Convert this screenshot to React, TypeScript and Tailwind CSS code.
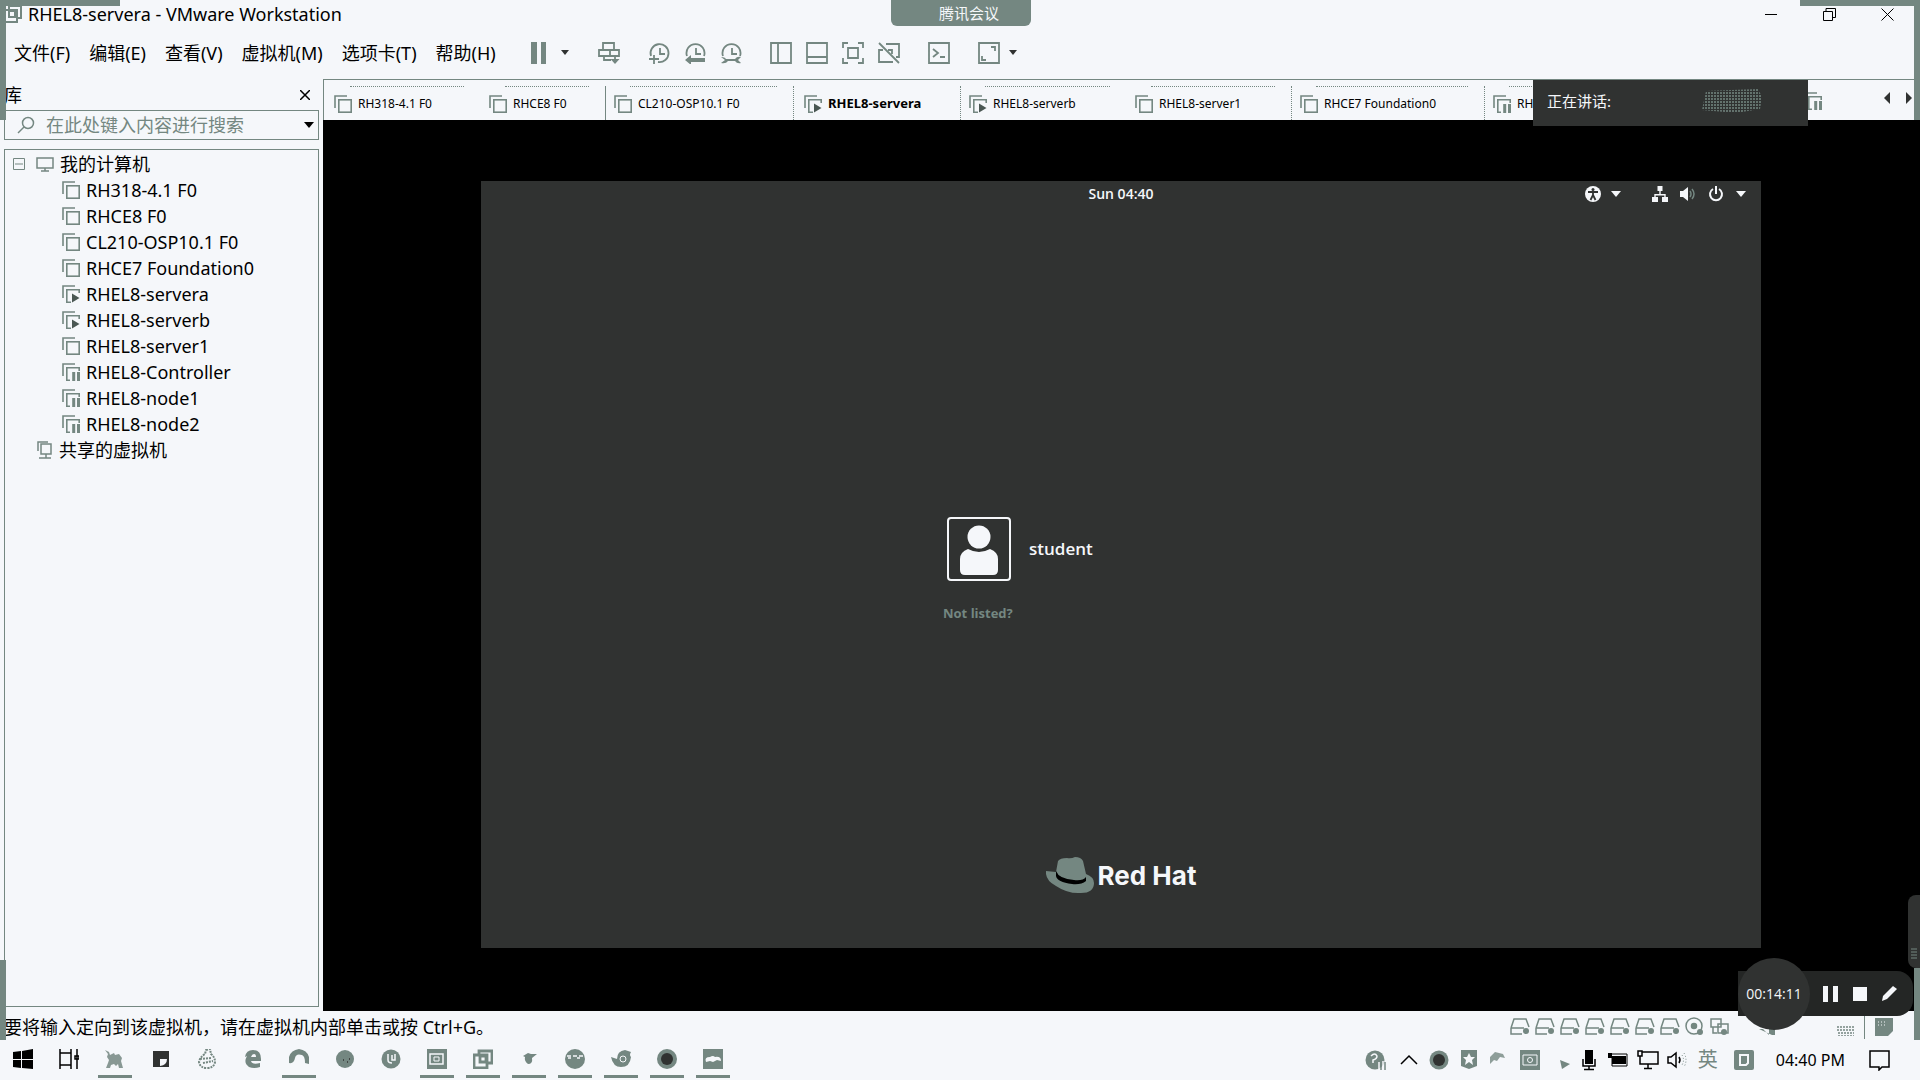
import React from "react";

const UI = "font-['Noto_Sans','Noto_Sans_CJK_SC',sans-serif]";

type VmState = "off" | "on" | "paused";

function VmIcon({ state = "off" }: { state?: VmState }) {
  return (
    <svg width="18" height="18" viewBox="0 0 18 18" className="shrink-0" fill="none" stroke="#748781" strokeWidth="1.6" aria-hidden="true">
      <path d="M1 13V1h12" />
      {state === "off" && <rect x="4.8" y="4.8" width="12.4" height="12.4" />}
      {state === "on" && (
        <>
          <path d="M9 17.2H4.8V4.8h12.4V8" />
          <path d="M10 8.5v9l7.5-4.5z" fill="#4a5753" stroke="none" />
        </>
      )}
      {state === "paused" && (
        <>
          <path d="M8 17.2H4.8V4.8h12.4V8" />
          <path d="M10.2 9h3v9h-3zM15 9h3v9h-3z" fill="#748781" stroke="none" />
        </>
      )}
    </svg>
  );
}

function Caret({ light = false }: { light?: boolean }) {
  return (
    <svg width="10" height="6" viewBox="0 0 10 6" className="shrink-0" aria-hidden="true">
      <path d="M0 0h10L5 6z" fill={light ? "#f5f7fa" : "#000"} />
    </svg>
  );
}

function Tool({ label, children }: { label: string; children: React.ReactNode }) {
  return (
    <button type="button" aria-label={label} className="flex h-6 w-9 items-center justify-center">
      <svg width="22" height="22" viewBox="0 0 22 22" fill="none" stroke="#748781" strokeWidth="1.8">
        {children}
      </svg>
    </button>
  );
}

const menus = ["文件(F)", "编辑(E)", "查看(V)", "虚拟机(M)", "选项卡(T)", "帮助(H)"];

const machines: { name: string; state?: VmState }[] = [
  { name: "RH318-4.1 F0" },
  { name: "RHCE8 F0" },
  { name: "CL210-OSP10.1 F0" },
  { name: "RHCE7 Foundation0" },
  { name: "RHEL8-servera", state: "on" },
  { name: "RHEL8-serverb", state: "on" },
  { name: "RHEL8-server1" },
  { name: "RHEL8-Controller", state: "paused" },
  { name: "RHEL8-node1", state: "paused" },
  { name: "RHEL8-node2", state: "paused" },
];

const tabs: { name: string; state?: VmState; width: string; edge: string; active?: boolean }[] = [
  { name: "RH318-4.1 F0", width: "w-[155px]", edge: "border-transparent" },
  { name: "RHCE8 F0", width: "w-[125px]", edge: "border-solid border-[#748781]" },
  { name: "CL210-OSP10.1 F0", width: "w-[188px]", edge: "border-dotted border-[#748781]" },
  { name: "RHEL8-servera", state: "on", width: "w-[167px]", edge: "border-dotted border-[#748781]", active: true },
  { name: "RHEL8-serverb", state: "on", width: "w-[166px]", edge: "border-transparent" },
  { name: "RHEL8-server1", width: "w-[165px]", edge: "border-dotted border-[#748781]" },
  { name: "RHCE7 Foundation0", width: "w-[193px]", edge: "border-dotted border-[#748781]" },
  { name: "RH", state: "paused", width: "w-[170px]", edge: "border-transparent" },
];

function TitleBar() {
  return (
    <header className="flex h-7 items-center justify-between">
      <div className="flex items-center gap-1.5 pl-1">
        <svg width="18" height="18" viewBox="0 0 18 18" fill="none" stroke="#748781" strokeWidth="2" aria-hidden="true">
          <path d="M5 5V1h12v12h-4" />
          <rect x="1" y="5" width="12" height="12" />
          <rect x="5" y="6" width="6" height="6" />
        </svg>
        <h1 className="text-lg leading-7">RHEL8-servera - VMware Workstation</h1>
      </div>
      <div className="flex pr-1">
        <button type="button" aria-label="最小化" className="flex h-7 w-[58px] items-center justify-center">
          <svg width="12" height="12" stroke="#000"><path d="M0 6.5h12" /></svg>
        </button>
        <button type="button" aria-label="还原" className="flex h-7 w-[58px] items-center justify-center">
          <svg width="13" height="13" stroke="#000" fill="none"><path d="M.5 3.500h9v9h-9zM3 3V.5h9.500v9H10" /></svg>
        </button>
        <button type="button" aria-label="关闭" className="flex h-7 w-[58px] items-center justify-center">
          <svg width="13" height="13" stroke="#000" fill="none"><path d="M.5.5l12 12M12.500.5l-12 12" /></svg>
        </button>
      </div>
    </header>
  );
}

function MenuBar() {
  return (
    <div className="flex h-[51px] items-center pb-0.5 pl-3.5">
      <nav className="flex w-[515px] gap-[19px]">
        {menus.map((m) => (
          <button key={m} type="button" className="text-lg leading-6 whitespace-nowrap">
            {m}
          </button>
        ))}
      </nav>
      <div className="flex items-center">
        <button type="button" aria-label="暂停" className="flex h-6 w-[62px] items-center gap-3.5">
          <svg width="18" height="22" viewBox="0 0 18 22" fill="#748781"><path d="M2 0h6v22H2zM12 0h5v22h-5z" /></svg>
          <svg width="8" height="5"><path d="M0 0h8L4 5z" fill="#303231" /></svg>
        </button>
        <Tool label="发送 Ctrl+Alt+Del">
          <path d="M5 8V1h11v7M1 8h20v6H1zM12 8v6M6 14v4h7M17 14v5" />
          <path d="M12.500 17h9L17 22z" fill="#748781" stroke="none" />
        </Tool>
        <div className="w-3.5" />
        <Tool label="拍摄快照">
          <path d="M3 14a9 9 0 1 1 7 6M12 6v6h5M6 13v9M1 17h10" />
        </Tool>
        <Tool label="恢复快照">
          <path d="M3 14a9 9 0 1 1 17 0M12 6v6h5" />
          <path d="M1 18l6-5v3h14v4H7v3z" fill="#748781" stroke="none" />
        </Tool>
        <Tool label="管理快照">
          <path d="M3 14a9 9 0 1 1 17 0M12 6v6h5" />
          <path d="M1 15q4 0 5 2h9q2-3 6-2l-3 3 3 3q-4 1-6-2H8q-2 3-7 2l4-3z" fill="#748781" stroke="none" />
        </Tool>
        <div className="w-3.5" />
        <Tool label="显示库"><path d="M1 1h20v20H1zM8 1v20" /></Tool>
        <Tool label="缩略图栏"><path d="M1 1h20v20H1zM1 15h20" /></Tool>
        <Tool label="全屏"><path d="M1 6V1h5M16 1h5v5M21 16v5h-5M6 21H1v-5M6 6h10v10H6z" /></Tool>
        <Tool label="Unity"><path d="M8 2h13v13h-3M15 20H1V8h4M1 1l20 20M10 8h4v4" /></Tool>
        <div className="w-3.5" />
        <Tool label="控制台"><path d="M1 1h20v20H1zM5 7l5 4-5 4M12 15h5" /></Tool>
        <div className="w-3.5" />
        <Tool label="拉伸"><path d="M1 1h20v20H1zM13 5h4v4M4 14v4h4" /></Tool>
        <button type="button" aria-label="更多" className="flex h-6 w-3 items-center justify-center">
          <svg width="8" height="5"><path d="M0 0h8L4 5z" fill="#303231" /></svg>
        </button>
      </div>
    </div>
  );
}

function Library() {
  return (
    <aside className="flex w-[323px] shrink-0 flex-col pr-1 pl-1">
      <div className="flex h-[31px] items-center justify-between pr-1.5">
        <h2 className="text-lg leading-7">库</h2>
        <button type="button" aria-label="关闭库" className="flex size-4 items-center justify-center">
          <svg width="10" height="10" stroke="#000" strokeWidth="1.500"><path d="M0 0l10 10M10 0L0 10" /></svg>
        </button>
      </div>
      <label className="flex h-[30px] items-center border border-[#748781] pr-1 pl-3">
        <svg width="18" height="18" viewBox="0 0 18 18" fill="none" stroke="#748781" strokeWidth="1.500" className="shrink-0" aria-hidden="true">
          <circle cx="11" cy="7" r="5.500" />
          <path d="M7 11l-6 6" />
        </svg>
        <input
          aria-label="搜索"
          placeholder="在此处键入内容进行搜索"
          className="ml-[11px] min-w-0 flex-1 bg-transparent text-lg leading-6 outline-none placeholder:text-[#748781] placeholder:opacity-100"
        />
        <Caret />
      </label>
      <ul className="mt-[9px] mb-1 flex-1 border border-[#748781] pt-px">
        <li className="flex h-[26px] items-center pl-2">
          <button type="button" aria-label="折叠" className="w-[23px]">
            <svg width="12" height="12" fill="none" stroke="#748781"><path d="M.5.5h11v11H.5zM2 6h8" /></svg>
          </button>
          <svg width="18" height="15" viewBox="0 0 18 15" fill="none" stroke="#748781" strokeWidth="1.500" aria-hidden="true">
            <path d="M1 1h16v10H1zM9 11v3M5 14h8" />
          </svg>
          <span className="ml-1.5 text-lg leading-6">我的计算机</span>
        </li>
        {machines.map((m) => (
          <li key={m.name} className="flex h-[26px] items-center gap-1.5 pl-[57px] text-lg leading-6">
            <VmIcon state={m.state} />
            {m.name}
          </li>
        ))}
        <li className="flex h-[26px] items-center pl-8">
          <svg width="16" height="18" viewBox="0 0 16 18" fill="none" stroke="#748781" strokeWidth="1.500" aria-hidden="true">
            <path d="M1 10V1h10M4 3h10v10H4zM9 13v4M2 17h12" />
          </svg>
          <span className="ml-1.5 text-lg leading-6">共享的虚拟机</span>
        </li>
      </ul>
    </aside>
  );
}

function TabStrip() {
  return (
    <div className="relative z-10 flex h-[41px] shrink-0 border-t border-l border-[#748781] pl-0.5">
      <div role="tablist" className="flex min-w-0 flex-1 overflow-hidden">
        {tabs.map((t) => (
          <button
            key={t.name}
            type="button"
            role="tab"
            aria-selected={!!t.active}
            className={
              "relative mt-1.5 flex shrink-0 items-center gap-1.5 border-r pt-0.5 whitespace-nowrap " +
              t.width + " " + t.edge + (t.active ? " pl-2.5 text-[13px] font-bold" : " pl-2 text-xs")
            }
          >
            {!t.active && <span className="absolute top-0 right-4 left-6 border-t border-dotted border-[#748781]" />}
            <VmIcon state={t.state} />
            {t.name}
          </button>
        ))}
      </div>
      <div className="flex items-center gap-4 pr-2 pb-1">
        <button type="button" role="tab" aria-label="RHEL8-node1" className="mr-[46px] pt-1.5">
          <VmIcon state="paused" />
        </button>
        <button type="button" aria-label="向左滚动"><svg width="6" height="12"><path d="M6 0v12L0 6z" fill="#303231" /></svg></button>
        <button type="button" aria-label="向右滚动"><svg width="6" height="12"><path d="M0 0v12l6-6z" fill="#303231" /></svg></button>
      </div>
      <div className="absolute top-0 right-28 flex h-[46px] w-[275px] items-center justify-between bg-[#303231] pr-[46px] pb-1 pl-3.5 text-[15px] text-[#f5f7fa]">
        <span>正在讲话:</span>
        <svg width="60" height="24" aria-hidden="true">
          <defs>
            <pattern id="dots" width="3" height="3" patternUnits="userSpaceOnUse">
              <rect width="2" height="2" fill="#748781" opacity=".75" />
            </pattern>
          </defs>
          <path d="M4 2l52-2 4 8-2 12-24 4-34-3z" fill="url(#dots)" />
        </svg>
      </div>
    </div>
  );
}

function GuestScreen() {
  return (
    <section className="flex min-h-0 flex-1 bg-black pt-[61px] pr-[159px] pb-[63px] pl-[158px] font-['Open_Sans',sans-serif] text-[#f5f7fa]">
      <div className="grid flex-1 grid-rows-[26px_1fr_auto] bg-[#303231]">
        <div className="grid grid-cols-[1fr_auto_1fr] items-center">
          <span />
          <span className="text-sm leading-6 font-semibold">Sun 04:40</span>
          <div className="flex items-center justify-end pr-[15px]">
            <button type="button" aria-label="辅助功能" className="mr-[31px] flex items-center gap-2.5">
              <svg width="16" height="16" viewBox="0 0 16 16" aria-hidden="true">
                <circle cx="8" cy="8" r="8" fill="#f5f7fa" />
                <circle cx="8" cy="3.500" r="1.500" fill="#303231" />
                <path d="M3 6h10M8 6v4M8 9l-2.500 5M8 9l2.500 5" stroke="#303231" strokeWidth="1.800" />
              </svg>
              <Caret light />
            </button>
            <button type="button" aria-label="系统菜单" className="flex items-center gap-3">
              <svg width="16" height="16" viewBox="0 0 16 16" fill="#f5f7fa" aria-hidden="true">
                <path d="M5.500 0h5v5h-5zM0 11h6v5H0zM10 11h6v5h-6zM7.300 5h1.400v3h5v3h-1.400V9.400H3.700V11H2.300V8h5z" />
              </svg>
              <svg width="16" height="16" viewBox="0 0 16 16" aria-hidden="true">
                <path d="M0 5h3l5-4v14l-5-4H0z" fill="#f5f7fa" />
                <path d="M10 5q2 3 0 6M12 3q4 5 0 10" fill="none" stroke="#748781" strokeWidth="1.500" />
              </svg>
              <svg width="16" height="16" viewBox="0 0 16 16" fill="none" stroke="#f5f7fa" strokeWidth="2" aria-hidden="true">
                <path d="M5 3a6 6 0 1 0 6 0M8 0v8" />
              </svg>
              <Caret light />
            </button>
          </div>
        </div>
        <div className="flex items-center justify-center pt-[74px]">
          <div className="mr-1 w-[352px]">
            <button type="button" className="ml-1 flex items-center gap-[18px]">
              <span className="flex size-16 items-end justify-center rounded-sm border-2 border-[#f5f7fa] pb-1">
                <svg width="38" height="50" viewBox="0 0 38 50" fill="#f5f7fa" aria-hidden="true">
                  <circle cx="19" cy="12" r="11.500" />
                  <path d="M8 24q11 6 22 0 8 3 8 10v11q0 5-5 5H5q-5 0-5-5V34q0-7 8-10z" />
                </svg>
              </span>
              <span className="text-[17px] leading-6 font-semibold">student</span>
            </button>
            <button type="button" className="mt-6 block text-[13px] leading-4 font-bold text-[#748781]">
              Not listed?
            </button>
          </div>
        </div>
        <div className="flex items-center justify-center gap-1 pb-[53px]">
          <svg width="48" height="38" viewBox="0 0 48 38" aria-hidden="true">
            <path d="M12 4q2-3 9-3 4 1 8-1 6 0 8 4l3 13q8 3 8 9 0 10-13 10-13 1-25-7Q-1 23 0 14l10 1z" fill="#748781" />
            <path d="M10 14q3 8 18 9 9 1 12-3v4q-5 4-14 3-15-2-16-8z" fill="#000" />
          </svg>
          <span className="font-['Inter',sans-serif] text-[26px] leading-9 font-bold">Red Hat</span>
        </div>
      </div>
    </section>
  );
}

function StatusBar() {
  return (
    <footer className="flex h-[29px] shrink-0 items-center justify-between pt-0.5 pr-[27px] pl-1">
      <p className="text-lg leading-7">要将输入定向到该虚拟机，请在虚拟机内部单击或按 Ctrl+G。</p>
      <div className="flex items-center">
        {[0, 1, 2, 3, 4, 5, 6].map((d) => (
          <button key={d} type="button" aria-label={"硬盘 " + (d + 1)} className="w-[25px]">
            <svg width="20" height="17" viewBox="0 0 20 17" fill="none" stroke="#748781" strokeWidth="1.500">
              <path d="M1 10L4 1h12l3 8M1 10h13M1 10v6h11" />
              <circle cx="16" cy="13" r="3" fill="#748781" stroke="none" />
            </svg>
          </button>
        ))}
        <button type="button" aria-label="CD/DVD" className="w-[25px]">
          <svg width="19" height="19" viewBox="0 0 19 19" fill="none" stroke="#748781" strokeWidth="1.500">
            <circle cx="9" cy="9" r="8" />
            <circle cx="9" cy="9" r="2.500" fill="#748781" />
            <circle cx="15" cy="15" r="3" fill="#748781" stroke="none" />
          </svg>
        </button>
        <button type="button" aria-label="网络适配器" className="mr-6 w-[25px]">
          <svg width="19" height="18" viewBox="0 0 19 18" fill="none" stroke="#748781" strokeWidth="1.500">
            <path d="M1 1h10v8H1zM8 6h10v9H8zM3 9v6h4" />
            <circle cx="14" cy="14" r="3" fill="#748781" stroke="none" />
          </svg>
        </button>
        <button type="button" aria-label="声卡" className="mr-[62px]">
          <svg width="16" height="18" viewBox="0 0 16 18" fill="#748781"><path d="M0 11h4l6 6v-6h6v6h-3" /></svg>
        </button>
        <button type="button" aria-label="键盘" className="pt-2 pr-2.5">
          <svg width="17" height="10" stroke="#748781" strokeWidth="1.500" strokeDasharray="2 1"><path d="M0 1h17M0 4h17M1 7h16M1 10h16" /></svg>
        </button>
        <button type="button" aria-label="消息日志" className="flex h-6 items-center border-l border-[#748781] pl-2.5">
          <svg width="18" height="18" fill="#748781"><path d="M0 0h18v13l-5 5H0z" /><path d="M3 4h9M3 7h9" stroke="#f5f7fa" strokeDasharray="1 2" /></svg>
        </button>
      </div>
    </footer>
  );
}

const apps: { label: string; open?: boolean; art: React.ReactNode }[] = [
  { label: "开始", art: <path d="M0 3l8-1v8H0zM9 2l11-2v10H9zM0 11h8v8l-8-1zM9 11h11v9L9 19z" fill="#000" /> },
  { label: "任务视图", art: <path d="M1 0v4h11V0M1 20v-4h11v4M1 4v12M12 4v12M18 0v20M16 7h4v3h-4z" fill="none" stroke="#000" strokeWidth="1.500" /> },
  { label: "助手", open: true, art: <path d="M0 1l4 2 1 3 4-2 1 2 4-1 3 4-1 3 2 7h-4l-1-4-2 2-2-2-3 1-1 3H1l2-5 1-3-2-3 1-3z" opacity=".85" /> },
  { label: "便笺", art: <><path d="M2 2h16v16H2z" fill="#303231" /><path d="M9 10h7q0 6-7 7z" fill="#f5f7fa" /></> },
  { label: "媒体", art: <path d="M9 1l4-1 1 5q4 3 4 8-1 6-8 6t-8-6q1-5 6-8zM3 10l12-1M6 14l10-2" fill="none" stroke="#748781" strokeWidth="2" strokeDasharray="2 1" /> },
  { label: "Edge", art: <path d="M2 8Q3 1 10 1q8 0 8 9v2H8q1 4 9 2v4q-6 2-11 0-6-4-2-11zm6 0h5q0-3-2-3t-3 3z" /> },
  { label: "导航", open: true, art: <path d="M0 14V8q2-7 10-8 8 1 10 8v7l-4-1q0-7-3-8-6-2-7 3-1 6-6 5z" /> },
  { label: "圆形应用", art: <><circle cx="10" cy="10" r="9" /><path d="M8 11h1M12 13h1M14 10h1" stroke="#303231" strokeWidth="1.500" /></> },
  { label: "浏览器", art: <><circle cx="10" cy="10" r="9.500" /><path d="M7 5v6q0 3 4 3M14 5v6h-3V6" fill="none" stroke="#f5f7fa" strokeWidth="1.500" /></> },
  { label: "录屏", open: true, art: <><path d="M0 0h20v20H0z" /><path d="M3 5h13v10H3z" fill="none" stroke="#f5f7fa" strokeWidth="1.500" /><path d="M7 8h5v4H7z" fill="none" stroke="#f5f7fa" /></> },
  { label: "VMware", open: true, art: <path d="M6 6V2h13v12h-5M1 6h13v13H1zM7 7h6v6H7z" fill="none" stroke="#748781" strokeWidth="2.800" /> },
  { label: "飞鸟", open: true, art: <path d="M4 7l5-3 3 1h6l-5 4q1 6-4 6-4-3-3-7z" /> },
  { label: "代理", open: true, art: <><circle cx="10" cy="10" r="10" /><path d="M2 7h4M8 7h4M14 7h4M3 9h3M12 9h3" stroke="#f5f7fa" strokeWidth="1.500" fill="none" /></> },
  { label: "鸟群", open: true, art: <><path d="M0 8l6 2q0-8 8-9l6 2q-2 3 0 5-1 10-10 10-8 0-10-10z" /><circle cx="12" cy="10" r="3" fill="none" stroke="#f5f7fa" /></> },
  { label: "摄像", open: true, art: <><circle cx="10" cy="10" r="10" /><circle cx="10" cy="10" r="6" fill="#303231" /></> },
  { label: "腾讯会议", open: true, art: <><path d="M0 0h20v20H0z" /><path d="M3 13q-2-5 4-5 3-2 5 0 6-1 6 4l-4-1-4 2-3-1z" fill="#f5f7fa" /></> },
];

function Tray({ label, width, children }: { label: string; width: string; children: React.ReactNode }) {
  return (
    <button type="button" aria-label={label} className={"flex h-10 items-center justify-center " + width}>
      <svg width="20" height="20" viewBox="0 0 20 20" fill="#748781" className="overflow-visible">
        {children}
      </svg>
    </button>
  );
}

function TaskBar() {
  return (
    <div className="flex h-10 shrink-0 items-center justify-between">
      <div className="flex">
        {apps.map((a) => (
          <button key={a.label} type="button" aria-label={a.label} className="relative flex h-10 w-[46px] items-center justify-center pb-0.5">
            <svg width="20" height="20" viewBox="0 0 20 20" fill="#748781">{a.art}</svg>
            {a.open && <span className="absolute right-1.5 bottom-0.5 left-1.5 h-[3px] bg-[#748781]" />}
          </button>
        ))}
      </div>
      <div className="flex items-center pr-[30px]">
        <Tray label="帮助" width="w-9">
          <circle cx="9" cy="10" r="9.500" />
          <path d="M5 6q4-4 6 0 0 3-4 4v3M13 12v8M17 11v9M21 13v7" fill="none" stroke="#f5f7fa" strokeWidth="1.500" />
          <path d="M15 11v9M19 12v8" stroke="#748781" strokeWidth="1.500" />
        </Tray>
        <Tray label="显示隐藏的图标" width="w-[30px]"><path d="M2 14l8-8 8 8" fill="none" stroke="#000" strokeWidth="1.500" /></Tray>
        <Tray label="录制" width="w-[30px]"><circle cx="10" cy="10" r="9.500" /><circle cx="10" cy="10" r="6" fill="#303231" /></Tray>
        <Tray label="安全" width="w-[30px]"><path d="M2 0h16v16l-8 3-8-3z" /><path d="M10 3l2 4h4l-3 3 1 5-4-3-4 3 1-5-3-3h4z" fill="#f5f7fa" /></Tray>
        <Tray label="通知" width="w-[26px]"><path d="M3 14V7l5-5 8 2 2 4-5-1-3 4-3-1z" opacity=".8" /></Tray>
        <Tray label="录屏" width="w-10"><path d="M0 0h20v20H0z" /><path d="M3 5h14v10H3z" fill="none" stroke="#f5f7fa" /><circle cx="10" cy="10" r="2.500" fill="none" stroke="#f5f7fa" /></Tray>
        <Tray label="播放" width="w-7"><path d="M6 10l10 4-8 5z" /></Tray>
        <Tray label="麦克风" width="w-[22px]"><path d="M6 0h8v14H6z" fill="#000" /><path d="M4 9v7h12V9M10 16v4M5 19.500h10" fill="none" stroke="#000" strokeWidth="1.500" /></Tray>
        <Tray label="电池" width="w-9"><path d="M4 6h14v8H4zM0 3h4v5H0z" fill="#000" /><path d="M3 4h16v12H4V8" fill="none" stroke="#000" /></Tray>
        <Tray label="网络" width="w-6"><path d="M4 2h16v12H2V6M10 14v4M6 18.500h8M0 1h4v5H0z" fill="none" stroke="#000" strokeWidth="1.500" /></Tray>
        <Tray label="音量" width="w-8"><path d="M2 7h3l5-4v14l-5-4H2zM13 7q2 3 0 6" fill="none" stroke="#000" strokeWidth="1.500" /><path d="M16 5q3 5 0 10M18 3q4 7 0 14" fill="none" stroke="#748781" strokeDasharray="1 2" /></Tray>
        <button type="button" className="w-8 text-xl leading-8 text-[#748781]">英</button>
        <Tray label="输入法" width="w-10"><rect width="20" height="20" rx="2" /><path d="M6 5h8v8l-2 2H6z" fill="none" stroke="#f5f7fa" strokeWidth="2" /></Tray>
        <time className="ml-3 text-base leading-6 whitespace-nowrap">04:40 PM</time>
        <button type="button" aria-label="操作中心" className="ml-6">
          <svg width="21" height="21" fill="none" stroke="#000" strokeWidth="1.500"><path d="M1 1h19v16h-7l-3 3v-3H1z" /></svg>
        </button>
      </div>
    </div>
  );
}

function Recorder() {
  return (
    <div className="absolute right-[7px] bottom-16 flex h-[45px] items-center rounded-r-2xl bg-[#242625] text-[#f5f7fa]">
      <time className="-my-4 flex size-[72px] items-center justify-center rounded-full bg-[#303231] font-['Open_Sans',sans-serif] text-sm">00:14:11</time>
      <div className="flex items-center gap-[15px] pr-4 pl-[13px]">
        <button type="button" aria-label="暂停录制"><svg width="15" height="16" fill="#f5f7fa"><path d="M0 0h5v16H0zM10 0h5v16h-5z" /></svg></button>
        <button type="button" aria-label="停止录制"><svg width="14" height="14" fill="#f5f7fa"><path d="M0 0h14v14H0z" /></svg></button>
        <button type="button" aria-label="画笔"><svg width="15" height="15" fill="#f5f7fa"><path d="M11 0l4 3L5 13l-5 2 1-5z" /></svg></button>
      </div>
    </div>
  );
}

export default function App() {
  return (
    <div className={"relative flex h-screen flex-col overflow-hidden bg-[#f5f7fa] text-black " + UI}>
      <TitleBar />
      <MenuBar />
      <div className="flex min-h-0 flex-1">
        <Library />
        <main className="flex min-w-0 flex-1 flex-col">
          <TabStrip />
          <GuestScreen />
        </main>
      </div>
      <StatusBar />
      <TaskBar />

      <div className="absolute top-0 left-0 h-[120px] w-1.5 bg-[#748781]" />
      <div className="absolute top-0 left-0 h-1.5 w-[120px] bg-[#748781]" />
      <div className="absolute top-0 right-0 h-[120px] w-1.5 bg-[#748781]" />
      <div className="absolute top-0 right-0 h-1.5 w-[120px] bg-[#748781]" />
      <div className="absolute bottom-10 left-0 h-20 w-1.5 bg-[#748781]" />
      <div className="absolute right-0 bottom-10 h-[72px] w-1.5 bg-[#748781]" />
      <div className="absolute right-0 bottom-28 flex h-[73px] w-3 items-end justify-center rounded-l-lg bg-[#303231] pb-2">
        <svg width="6" height="12" stroke="#748781"><path d="M0 1h6M0 4h6M0 7h6M0 10h6" /></svg>
      </div>
      <div className="absolute top-0 left-[891px] flex h-[26px] w-[140px] items-center justify-center rounded-b-md bg-[#748781] pl-4 text-[15px] text-[#f5f7fa]">
        腾讯会议
      </div>
      <Recorder />
    </div>
  );
}
